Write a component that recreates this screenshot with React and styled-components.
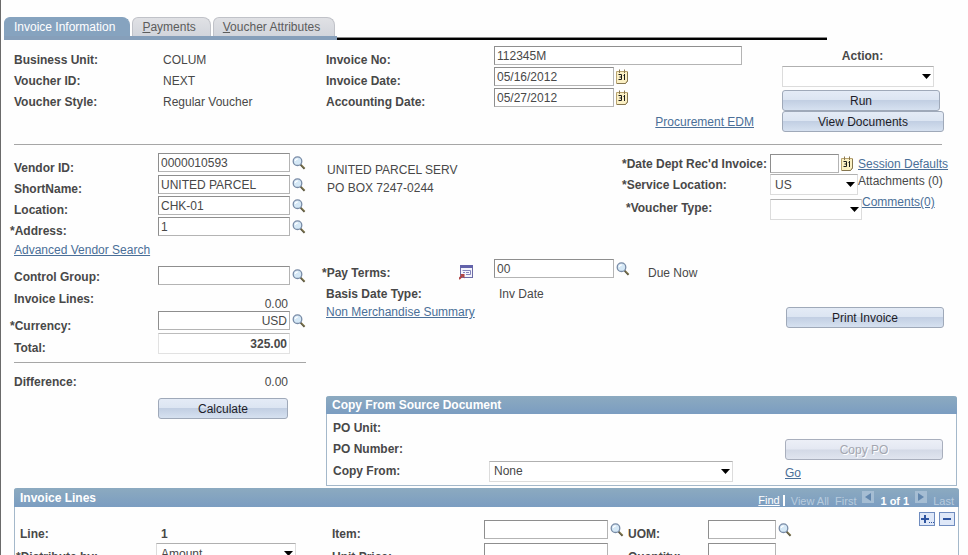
import React from "react";
import styled, { createGlobalStyle } from "styled-components";

const GlobalStyle = createGlobalStyle`
    * {
        box-sizing: border-box;
    }

    body {
        margin: 0;
        background: #fefefe;
    }

    body, input, select, button {
        font-family: "Liberation Sans", Arial, sans-serif;
        font-size: 12px;
        line-height: 14px;
        color: #484848;
    }
`;

const Page = styled.main`
    height: 100vh;
    overflow: hidden;
    border-left: 1px solid #6a6a6a;
    padding: 17px 9px 0 3px;
`;

const TabBar = styled.nav`
    display: flex;
    align-items: flex-end;
`;

const TabStrip = styled.div`
    display: flex;
    gap: 2px;
    padding-right: 2px;
    border-bottom: 4px solid #869fba;
`;

const Tab = styled.button`
    height: 19px;
    padding: 0 14px 0 9px;
    border: 1px solid ${(props) => (props.$active ? "#86a3bf" : "#c0c2c8")};
    border-bottom: none;
    border-radius: 6px 8px 0 0;
    background: ${(props) =>
        props.$active ? "#86a3bf" : "linear-gradient(#e0e1e5, #d2d5dc)"};
    color: ${(props) => (props.$active ? "#ffffff" : "#5c5c5c")};
`;

const TabLine = styled.div`
    flex: 1;
    height: 3px;
    margin-right: 132px;
    border-top: 1px solid #8a8a8a;
    background: #000000;
`;

const Content = styled.div`
    padding-left: 10px;
`;

const Header = styled.section`
    display: grid;
    grid-template-columns: 292px 1fr 161px;
    column-gap: 20px;
    padding: 6px 16px 12px 0;
`;

const Rule = styled.hr`
    height: 1px;
    margin: ${(props) => props.$margin || "0"};
    border: none;
    background: #a6a6a6;
`;

const Row = styled.div`
    display: grid;
    grid-template-columns: ${(props) => props.$label || 144}px 1fr;
    align-items: ${(props) => props.$align || "end"};
    height: ${(props) => props.$height || 21}px;
`;

const Label = styled.label`
    font-weight: bold;
    white-space: nowrap;
    margin-left: ${(props) => (props.$required ? "-4px" : "0")};
`;

const Field = styled.div`
    display: flex;
    align-items: center;
    align-self: ${(props) => props.$align || "start"};
    gap: 2px;
`;

const Value = styled.span`
    padding-left: 5px;
    white-space: nowrap;
`;

const Amount = styled.output`
    width: 132px;
    padding-right: 2px;
    text-align: right;
`;

const Input = styled.input`
    width: ${(props) => props.$width || 132}px;
    height: 19px;
    padding: 0 2px;
    border: 1px solid #b4b4b4;
    border-top-color: #8e8e8e;
    border-left-color: #8e8e8e;
    background: #ffffff;
    text-align: ${(props) => (props.$right ? "right" : "left")};
`;

const TotalInput = styled(Input)`
    height: 21px;
    border-color: #bcbcbc #e2e2e2 #e2e2e2;
    font-weight: bold;
`;

const SelectBox = styled.div`
    display: grid;
    align-items: center;
    width: ${(props) => props.$width}px;

    > * {
        grid-area: 1 / 1;
    }

    svg {
        justify-self: end;
        margin-right: 3px;
        pointer-events: none;
    }
`;

const SelectControl = styled.select`
    appearance: none;
    width: 100%;
    height: 21px;
    padding: 0 14px 0 4px;
    border: 1px solid #dcdcdc;
    border-top-color: #b0b0b0;
    border-radius: 0;
    background: #ffffff;
`;

const IconButton = styled.button`
    display: flex;
    padding: 0;
    border: none;
    background: none;
`;

const Button = styled.button`
    width: ${(props) => props.$width || 158}px;
    height: 21px;
    padding: 0;
    border: 1px solid #9fa9b9;
    border-radius: 3px;
    background: linear-gradient(
        #e4ebf6 0%,
        #dce5f2 45%,
        #c2cfe3 50%,
        #d6e1f0 100%
    );
    color: #1c1c28;

    &:disabled {
        border-color: #a9afbd;
        background: linear-gradient(#eceff7 0%, #e4e8f2 48%, #d3d9e6 52%, #e0e5ef);
        color: #a3a6b0;
        text-shadow: 1px 1px #ffffff;
    }
`;

const Link = styled.a`
    color: #4a6f98;
    white-space: nowrap;
`;

const Documents = styled.div`
    text-align: right;
    padding: 6px 8px 0 0;
`;

const ActionPanel = styled.div`
    display: flex;
    flex-direction: column;
    align-items: flex-start;
    padding-top: 3px;

    label {
        align-self: center;
        padding-bottom: 3px;
    }
`;

const ActionButtons = styled.div`
    display: grid;
    padding-top: 3px;
`;

const Columns = styled.div`
    display: grid;
    grid-template-columns: 292px 1fr;
    column-gap: 20px;
    padding-top: 8px;
`;

const LinkRow = styled.div`
    padding: 5px 0 9px;
`;

const CalculateRow = styled.div`
    padding: 9px 0 0 144px;
`;

const Difference = styled.div`
    padding-top: 12px;
`;

const VendorDetails = styled.section`
    display: flex;
    justify-content: space-between;
`;

const Address = styled.address`
    padding: 8px 0 0 1px;
    font-style: normal;
    line-height: 18px;
`;

const Dept = styled.div`
    width: 333px;
`;

const DeptRow = styled.div`
    display: flex;
    align-items: center;
    height: ${(props) => props.$height || 21}px;
`;

const DeptLabel = styled(Label)`
    width: ${(props) => (props.$required ? 148 : 144)}px;
`;

const DeptField = styled.div`
    display: flex;
    align-items: center;
    gap: 2px;
    align-self: ${(props) => props.$align || "center"};
    padding-right: ${(props) => props.$gap || 0}px;
`;

const DeptLink = styled.span`
    align-self: ${(props) => props.$align || "center"};
    white-space: nowrap;
`;

const Terms = styled.section`
    display: flex;
    justify-content: space-between;
    padding: 39px 15px 68px 0;
`;

const TermsFields = styled.div`
    padding-bottom: 9px;
`;

const TermsRow = styled(Row)`
    grid-template-columns: 133px 35px auto auto;
`;

const DueText = styled.span`
    padding-left: 18px;
`;

const PrintCell = styled.div`
    align-self: flex-end;
`;

const Group = styled.section`
    margin-right: ${(props) => props.$inset || 0}px;
    border: 1px solid #a4b8ca;
    border-top: none;
    border-radius: 3px 3px 0 0;
`;

const GroupHeader = styled.header`
    display: flex;
    align-items: center;
    justify-content: space-between;
    height: ${(props) => props.$height || 18}px;
    margin: 0 -1px;
    padding: 0 5px 0 6px;
    border-radius: 3px 3px 0 0;
    background: linear-gradient(#8caac0, #7b9dc1);
    color: #ffffff;
`;

const GroupTitle = styled.h2`
    margin: 0;
    font-size: 12px;
`;

const CopyGrid = styled.div`
    display: grid;
    grid-template-columns: 1fr 158px;
    padding: 3px 13px 2px 6px;
`;

const CopyActions = styled.div`
    display: flex;
    flex-direction: column;
    align-items: flex-start;
    gap: 6px;
    padding-top: 22px;
`;

const Lines = styled.div`
    padding-top: 2px;
`;

const Pager = styled.div`
    display: flex;
    align-items: center;
    padding-top: 6px;
    gap: 6px;
    font-size: 11px;
    color: #b9ccde;

    a {
        color: #ffffff;
        padding-right: 3px;
    }

    strong {
        color: #ffffff;
    }
`;

const FindCell = styled.span`
    border-right: 2px solid #ffffff;
    line-height: 11px;
`;

const PagerButton = styled.button`
    display: flex;
    align-items: center;
    justify-content: center;
    width: 12px;
    height: 12px;
    margin-bottom: 8px;
    padding: 0;
    border: none;
    background: #a5bdd3;
`;

const LineTools = styled.div`
    display: flex;
    justify-content: flex-end;
    gap: 4px;
    height: 13px;
    padding: 5px 3px 0 0;
`;

const SquareButton = styled.button`
    display: flex;
    align-items: center;
    justify-content: center;
    width: 16px;
    height: 14px;
    padding: 0;
    border: 1px solid #6f8cbf;
    background: #dfe8f8;
`;

const LineGrid = styled.div`
    display: grid;
    grid-template-columns: 312px 296px 1fr;
    row-gap: 2px;
    padding-left: 5px;
`;

const LineNumber = styled.strong`
    padding-left: 5px;
`;

const SearchIcon = () => (
    <svg width="14" height="14" viewBox="0 0 14 14" aria-hidden="true">
        <path d="M8.6 8.6 L12.6 12.8" stroke="#57523c" strokeWidth="2" />
        <path d="M9.6 9 L12.8 12" stroke="#a9a06e" strokeWidth="1" />
        <circle cx="5.5" cy="5.2" r="4.3" fill="#d5e8f6" stroke="#788ba6" strokeWidth="1.3" />
        <path d="M3.2 5 Q3.6 3 5.8 2.8" fill="none" stroke="#ffffff" strokeWidth="1.2" />
    </svg>
);

const CalendarIcon = () => (
    <svg width="13" height="15" viewBox="0 0 13 15" aria-hidden="true">
        <path d="M.5 2.5 H11.5 V12 L9.5 14.5 H.5 Z" fill="#fbf0c4" stroke="#b8a472" />
        <path d="M11.5 3 V12 L9.5 14.5 H1" fill="none" stroke="#857650" />
        <path d="M3.5 .5 V4 M8.5 .5 V4" stroke="#8a7850" />
        <path
            d="M2.5 5.5 H5.5 V10.5 H2.5 M3.5 8 H5.5 M7.5 6.5 H8.5 V5 V11"
            fill="none"
            stroke="#1c1c1c"
        />
    </svg>
);

const TransferIcon = () => (
    <svg width="15" height="15" viewBox="0 0 15 15" aria-hidden="true">
        <rect x="1.5" y=".5" width="12" height="12" fill="#f4f4fc" stroke="#6c6ca6" />
        <rect x="1" y="0" width="13" height="3" fill="#6262aa" />
        <path d="M3.5 5.5 H11.5 V9.5 H7 M4 7.5 H6 M7 7.5 H10" fill="none" stroke="#8484ba" />
        <path d="M0 14 L4 10" stroke="#b04444" strokeWidth="2" />
        <path d="M1 9 H5.5 V13.5 Z" fill="#b04444" />
    </svg>
);

const Arrow = () => (
    <svg width="9" height="5" viewBox="0 0 9 5" aria-hidden="true">
        <path d="M0 0 H9 L4.5 5 Z" fill="#000000" />
    </svg>
);

const Select = ({ id, width, options = [""], label }) => (
    <SelectBox $width={width}>
        <SelectControl id={id} aria-label={label}>
            {options.map((option) => (
                <option key={option}>{option}</option>
            ))}
        </SelectControl>
        <Arrow />
    </SelectBox>
);

const Lookup = ({ label }) => (
    <IconButton type="button" aria-label={`Look up ${label}`}>
        <SearchIcon />
    </IconButton>
);

const Calendar = ({ label }) => (
    <IconButton type="button" aria-label={`Choose ${label}`}>
        <CalendarIcon />
    </IconButton>
);

const vendorFields = [
    { id: "vendor", label: "Vendor ID", value: "0000010593", height: 22 },
    { id: "shortName", label: "ShortName", value: "UNITED PARCEL" },
    { id: "location", label: "Location", value: "CHK-01" },
    { id: "address", label: "Address", value: "1", required: true },
];

const LookupRow = ({ id, label, value, height, required, align, right }) => (
    <Row $height={height} $align={align}>
        <Label htmlFor={id} $required={required}>
            {required && "*"}
            {label}:
        </Label>
        <Field>
            <Input id={id} defaultValue={value} $right={right} />
            <Lookup label={label} />
        </Field>
    </Row>
);

const Tabs = () => (
    <TabBar>
        <TabStrip>
            <Tab type="button" $active>
                Invoice Information
            </Tab>
            <Tab type="button">
                <u>P</u>ayments
            </Tab>
            <Tab type="button">
                <u>V</u>oucher Attributes
            </Tab>
        </TabStrip>
        <TabLine />
    </TabBar>
);

const VoucherHeader = () => (
    <Header>
        <div>
            <Row>
                <Label as="span">Business Unit:</Label>
                <Value>COLUM</Value>
            </Row>
            <Row>
                <Label as="span">Voucher ID:</Label>
                <Value>NEXT</Value>
            </Row>
            <Row>
                <Label as="span">Voucher Style:</Label>
                <Value>Regular Voucher</Value>
            </Row>
        </div>
        <div>
            <Row $label={168}>
                <Label htmlFor="invoiceNo">Invoice No:</Label>
                <Field>
                    <Input id="invoiceNo" defaultValue="112345M" $width={248} />
                </Field>
            </Row>
            <Row $label={168}>
                <Label htmlFor="invoiceDate">Invoice Date:</Label>
                <Field>
                    <Input id="invoiceDate" defaultValue="05/16/2012" $width={120} />
                    <Calendar label="invoice date" />
                </Field>
            </Row>
            <Row $label={168}>
                <Label htmlFor="accountingDate">Accounting Date:</Label>
                <Field>
                    <Input id="accountingDate" defaultValue="05/27/2012" $width={120} />
                    <Calendar label="accounting date" />
                </Field>
            </Row>
            <Documents>
                <Link href="#edm">Procurement EDM</Link>
            </Documents>
        </div>
        <ActionPanel>
            <Label htmlFor="action">Action:</Label>
            <Select id="action" width={152} />
            <ActionButtons>
                <Button type="button">Run</Button>
                <Button type="button" $width={162}>
                    View Documents
                </Button>
            </ActionButtons>
        </ActionPanel>
    </Header>
);

const VendorColumn = () => (
    <div>
        {vendorFields.map((field) => (
            <LookupRow key={field.id} {...field} />
        ))}
        <LinkRow>
            <Link href="#vendor-search">Advanced Vendor Search</Link>
        </LinkRow>
        <LookupRow id="controlGroup" label="Control Group" align="center" />
        <Row $height={24} $align="center">
            <Label htmlFor="lineTotal">Invoice Lines:</Label>
            <Field $align="end">
                <Amount id="lineTotal">0.00</Amount>
            </Field>
        </Row>
        <LookupRow id="currency" label="Currency" value="USD" height={22} required right />
        <Row $height={22}>
            <Label htmlFor="total">Total:</Label>
            <Field>
                <TotalInput id="total" defaultValue="325.00" $right />
            </Field>
        </Row>
        <Rule $margin="7px 0 0" />
        <Difference>
            <Row $height={14}>
                <Label htmlFor="difference">Difference:</Label>
                <Amount id="difference">0.00</Amount>
            </Row>
        </Difference>
        <CalculateRow>
            <Button type="button" $width={130}>
                Calculate
            </Button>
        </CalculateRow>
    </div>
);

const DeptFields = () => (
    <Dept>
        <DeptRow>
            <DeptLabel htmlFor="deptDate" $required>
                *Date Dept Rec'd Invoice:
            </DeptLabel>
            <DeptField $gap={4}>
                <Input id="deptDate" $width={69} />
                <Calendar label="department date" />
            </DeptField>
            <Link href="#defaults">Session Defaults</Link>
        </DeptRow>
        <DeptRow>
            <DeptLabel htmlFor="serviceLocation" $required>
                *Service Location:
            </DeptLabel>
            <Select id="serviceLocation" width={88} options={["US"]} />
            <DeptLink $align="start">Attachments (0)</DeptLink>
        </DeptRow>
        <DeptRow $height={25}>
            <DeptLabel htmlFor="voucherType">*Voucher Type:</DeptLabel>
            <DeptField $align="end">
                <Select id="voucherType" width={92} />
            </DeptField>
            <DeptLink $align="start">
                <Link href="#comments">Comments(0)</Link>
            </DeptLink>
        </DeptRow>
    </Dept>
);

const PayTerms = () => (
    <Terms>
        <TermsFields>
            <TermsRow>
                <Label htmlFor="payTerms" $required>
                    *Pay Terms:
                </Label>
                <IconButton type="button" aria-label="Payment terms detail">
                    <TransferIcon />
                </IconButton>
                <Field>
                    <Input id="payTerms" defaultValue="00" $width={120} />
                    <Lookup label="pay terms" />
                </Field>
                <DueText>Due Now</DueText>
            </TermsRow>
            <Row $label={168}>
                <Label as="span">Basis Date Type:</Label>
                <Value>Inv Date</Value>
            </Row>
            <Row $height={18}>
                <Link href="#summary">Non Merchandise Summary</Link>
            </Row>
        </TermsFields>
        <PrintCell>
            <Button type="button">Print Invoice</Button>
        </PrintCell>
    </Terms>
);

const CopySource = () => (
    <Group $inset={2}>
        <GroupHeader>
            <GroupTitle>Copy From Source Document</GroupTitle>
        </GroupHeader>
        <CopyGrid>
            <div>
                <Row $align="center">
                    <Label as="span">PO Unit:</Label>
                </Row>
                <Row $align="center">
                    <Label as="span">PO Number:</Label>
                </Row>
                <Row $label={156} $height={24} $align="center">
                    <Label htmlFor="copyFrom">Copy From:</Label>
                    <Field $align="center">
                        <Select id="copyFrom" width={244} options={["None"]} />
                    </Field>
                </Row>
            </div>
            <CopyActions>
                <Button type="button" disabled>
                    Copy PO
                </Button>
                <Link href="#go">Go</Link>
            </CopyActions>
        </CopyGrid>
    </Group>
);

const InvoiceLines = () => (
    <Group>
        <GroupHeader $height={19}>
            <GroupTitle>Invoice Lines</GroupTitle>
            <Pager>
                <FindCell>
                    <a href="#find">Find</a>
                </FindCell>
                <span>View All</span>
                <span>First</span>
                <PagerButton type="button" aria-label="Previous line">
                    <svg width="6" height="8" viewBox="0 0 6 8">
                        <path d="M6 0 V8 L0 4 Z" fill="#6286ad" />
                    </svg>
                </PagerButton>
                <strong>1 of 1</strong>
                <PagerButton type="button" aria-label="Next line">
                    <svg width="6" height="8" viewBox="0 0 6 8">
                        <path d="M0 0 V8 L6 4 Z" fill="#6286ad" />
                    </svg>
                </PagerButton>
                <span>Last</span>
            </Pager>
        </GroupHeader>
        <LineTools>
            <SquareButton type="button" aria-label="Add lines">
                <svg width="14" height="10" viewBox="0 0 14 10">
                    <path d="M1 5 H9 M5 1 V9" stroke="#2f55a0" strokeWidth="2" />
                    <path d="M9 8.5 H14" stroke="#2f55a0" strokeDasharray="1 1" />
                </svg>
            </SquareButton>
            <SquareButton type="button" aria-label="Delete line">
                <svg width="8" height="2" viewBox="0 0 8 2">
                    <path d="M0 1 H8" stroke="#2f55a0" strokeWidth="2" />
                </svg>
            </SquareButton>
        </LineTools>
        <LineGrid>
            <Row $label={136}>
                <Label as="span">Line:</Label>
                <LineNumber>1</LineNumber>
            </Row>
            <Row $label={152}>
                <Label htmlFor="item">Item:</Label>
                <Field>
                    <Input id="item" $width={124} />
                    <Lookup label="item" />
                </Field>
            </Row>
            <Row $label={80}>
                <Label htmlFor="uom">UOM:</Label>
                <Field>
                    <Input id="uom" $width={68} />
                    <Lookup label="unit of measure" />
                </Field>
            </Row>
            <Row $label={136}>
                <Label htmlFor="distribute" $required>
                    *Distribute by:
                </Label>
                <Field>
                    <Select id="distribute" width={140} options={["Amount"]} />
                </Field>
            </Row>
            <Row $label={152}>
                <Label htmlFor="unitPrice">Unit Price:</Label>
                <Field>
                    <Input id="unitPrice" $width={124} />
                </Field>
            </Row>
            <Row $label={80}>
                <Label htmlFor="quantity">Quantity:</Label>
                <Field>
                    <Input id="quantity" $width={68} />
                </Field>
            </Row>
        </LineGrid>
    </Group>
);

export default function App() {
    return (
        <Page>
            <GlobalStyle />
            <Tabs />
            <Content>
                <VoucherHeader />
                <Rule $margin="0 17px 0 0" />
                <Columns>
                    <VendorColumn />
                    <div>
                        <VendorDetails>
                            <Address>
                                UNITED PARCEL SERV
                                <br />
                                PO BOX 7247-0244
                            </Address>
                            <DeptFields />
                        </VendorDetails>
                        <PayTerms />
                        <CopySource />
                    </div>
                </Columns>
                <Lines>
                    <InvoiceLines />
                </Lines>
            </Content>
        </Page>
    );
}
